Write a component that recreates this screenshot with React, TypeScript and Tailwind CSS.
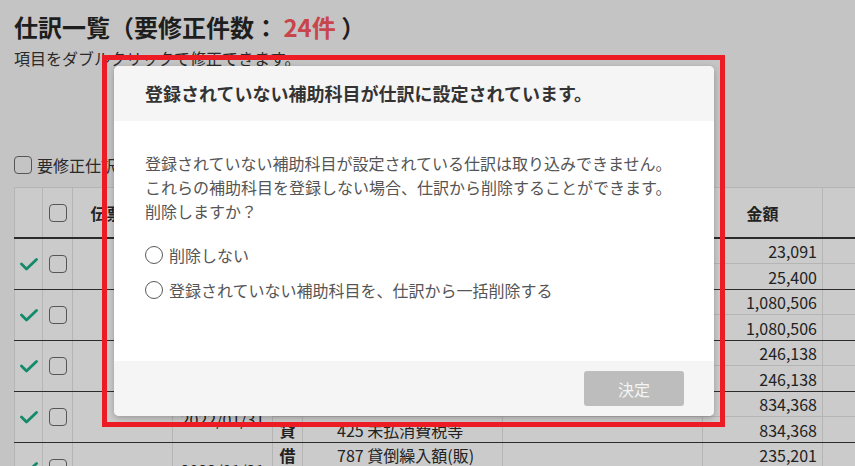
import React from "react";

type Line = { side: string; account: string; amount: string };
type Entry = { date: string; lines: Line[] };

const entries: Entry[] = [
  {
    date: "2022/01/31",
    lines: [
      { side: "借", account: "111 普通預金", amount: "23,091" },
      { side: "貸", account: "135 売掛金", amount: "25,400" },
    ],
  },
  {
    date: "2022/01/31",
    lines: [
      { side: "借", account: "111 普通預金", amount: "1,080,506" },
      { side: "貸", account: "135 売掛金", amount: "1,080,506" },
    ],
  },
  {
    date: "2022/01/31",
    lines: [
      { side: "借", account: "604 外注費", amount: "246,138" },
      { side: "貸", account: "312 買掛金", amount: "246,138" },
    ],
  },
  {
    date: "2022/01/31",
    lines: [
      { side: "借", account: "189 仮払消費税等", amount: "834,368" },
      { side: "貸", account: "425 未払消費税等", amount: "834,368" },
    ],
  },
  {
    date: "2022/01/31",
    lines: [
      { side: "借", account: "787 貸倒繰入額(販)", amount: "235,201" },
      { side: "貸", account: "165 貸倒引当金", amount: "235,201" },
    ],
  },
];

function CheckMark() {
  return (
    <svg width="18" height="13" viewBox="0 0 18 13" fill="none">
      <polyline
        points="1.5,6 6.5,11 16.5,1.5"
        stroke="#138a6a"
        strokeWidth="2.8"
        strokeLinecap="round"
        strokeLinejoin="round"
      />
    </svg>
  );
}

function Box() {
  return <span className="block w-[18px] h-[18px] rounded-[4px] border-[1.5px] border-[#565656]" />;
}

function Radio({ label }: { label: string }) {
  return (
    <label className="flex items-center h-[24px]">
      <span className="w-[18px] h-[18px] rounded-full border-[1.5px] border-[#5a5a5a] shrink-0" />
      <span className="ml-[6px]">{label}</span>
    </label>
  );
}

export default function App() {
  return (
    <div
      className="relative w-[855px] h-[466px] overflow-hidden bg-[#c4c4c4] text-[#222]"
      style={{ fontFamily: '"Noto Sans CJK JP", "Noto Sans", sans-serif' }}
    >
      <div className="pl-[14px] pt-[11px]">
        <h1 className="text-[24px] leading-[32px] font-bold text-[#1e1e1e] whitespace-nowrap">
          仕訳一覧（要修正件数： <span className="text-[#c8464b]">24件</span> ）
        </h1>
        <p className="mt-[4px] text-[16px] leading-[22px] text-[#2a2a2a]">項目をダブルクリックで修正できます。</p>
        <label className="mt-[84px] flex items-center h-[24px] text-[16px] text-[#2a2a2a]">
          <Box />
          <span className="ml-[5px]">要修正仕訳のみ表示</span>
        </label>

        <div className="mt-[10px] w-[1100px] bg-[#cbcbcb] text-[16px]">
          {/* header */}
          <div className="flex h-[52px] border-t border-b-2 border-t-[#b5b5b5] border-b-[#2b2b2b] font-bold">
            <div className="w-[29px] border-l border-r border-[#b5b5b5]" />
            <div className="w-[30px] border-r border-[#b5b5b5] flex items-center justify-center">
              <Box />
            </div>
            <div className="w-[100px] border-r border-[#b5b5b5] flex items-center justify-center">伝票番号</div>
            <div className="w-[100px] border-r border-[#b5b5b5] flex items-center justify-center">日付</div>
            <div className="w-[30px] border-r border-[#b5b5b5] flex items-center justify-center">区</div>
            <div className="w-[200px] border-r border-[#b5b5b5] flex items-center justify-center">勘定科目</div>
            <div className="w-[200px] border-r border-[#b5b5b5] flex items-center justify-center">補助科目</div>
            <div className="w-[120px] border-r border-[#b5b5b5] flex items-center justify-center">金額</div>
            <div className="w-[260px] border-r border-[#b5b5b5] flex items-center justify-center">摘要</div>
          </div>

          {entries.map((e, i) => (
            <div key={i} className="flex h-[51px] border-b border-[#2b2b2b]">
              <div className="w-[29px] border-l border-r border-[#b5b5b5] flex items-center justify-center">
                <CheckMark />
              </div>
              <div className="w-[30px] border-r border-[#b5b5b5] flex items-center justify-center">
                <Box />
              </div>
              <div className="w-[100px] border-r border-[#b5b5b5]" />
              <div className="w-[100px] border-r border-[#b5b5b5] flex items-center justify-center pt-[4px]">
                {e.date}
              </div>
              <div className="flex flex-col">
                {e.lines.map((l, j) => (
                  <div
                    key={j}
                    className={j === 0 ? "flex h-[25px] border-b border-[#b5b5b5]" : "flex flex-1"}
                  >
                    <div className="w-[30px] border-r border-[#b5b5b5] flex items-center justify-center font-bold">
                      {l.side}
                    </div>
                    <div className="w-[200px] border-r border-[#b5b5b5] flex items-center pl-[34px] whitespace-nowrap">
                      {l.account}
                    </div>
                    <div className="w-[200px] border-r border-[#b5b5b5]" />
                    <div className="w-[120px] border-r border-[#b5b5b5] flex items-center justify-end pr-[5px]">
                      {l.amount}
                    </div>
                    <div className="w-[260px] border-r border-[#b5b5b5]" />
                  </div>
                ))}
              </div>
            </div>
          ))}
        </div>
      </div>

      {/* modal */}
      <div className="absolute left-[114px] top-[66px] w-[600px] h-[350px] rounded-[5px] bg-white overflow-hidden shadow-[0_2px_6px_rgba(0,0,0,0.25)] flex flex-col">
        <div className="h-[55px] bg-[#f5f5f5] flex items-center px-[31px] text-[18px] font-bold text-[#333]">
          登録されていない補助科目が仕訳に設定されています。
        </div>
        <div className="flex-1 px-[31px] pt-[30px] text-[16px] leading-[24px] text-[#555]">
          <p>登録されていない補助科目が設定されている仕訳は取り込みできません。</p>
          <p>これらの補助科目を登録しない場合、仕訳から削除することができます。</p>
          <p>削除しますか？</p>
          <div className="mt-[20px] flex flex-col gap-[11px]">
            <Radio label="削除しない" />
            <Radio label="登録されていない補助科目を、仕訳から一括削除する" />
          </div>
        </div>
        <div className="h-[55px] bg-[#f5f5f5] flex items-center justify-end pr-[30px]">
          <button className="w-[100px] h-[35px] rounded-[3px] bg-[#bdbdbd] text-[#f4f4f4] text-[16px]">決定</button>
        </div>
      </div>

      {/* annotation frame */}
      <div className="absolute left-[102px] top-[55px] w-[623px] h-[372px] border-[5px] border-[#ed1c24]" />
    </div>
  );
}
